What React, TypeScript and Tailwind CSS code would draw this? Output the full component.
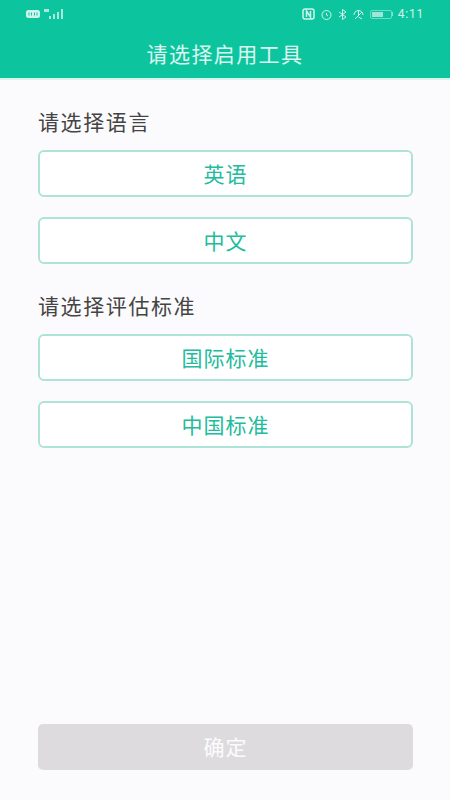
const cjk = "font-['Noto_Sans_CJK_SC','Noto_Sans',sans-serif]";

function OptionButton({ label }: { label: string }) {
  return (
    <button className="flex h-[47px] w-full items-center justify-center rounded-[6px] border-2 border-[#b0e3d7] bg-white pb-px text-[21px] leading-none tracking-[1px] text-[#22bb9c]">
      {label}
    </button>
  );
}

function StatusBar() {
  return (
    <div className="flex h-[28px] items-center justify-between px-[26px] text-white/80">
      <div className="flex items-center gap-[3px]">
        <svg width="14" height="10" viewBox="0 0 14 10" fill="currentColor">
          <rect x="0" y="1" width="14" height="8" rx="2.5" />
          <path d="M3 3.5v3M5.5 3.5v3M8.5 3.5v3M11 3.5v3" stroke="#0cc49e" strokeWidth="1" />
        </svg>
        <svg width="21" height="11" viewBox="0 0 21 11" fill="currentColor" opacity="0.8">
          <rect x="1" y="0" width="5" height="3" />
          <rect x="6" y="7" width="2" height="3" />
          <rect x="10" y="5" width="2" height="5" />
          <rect x="14" y="3" width="2" height="7" />
          <rect x="18" y="0" width="2" height="10" />
        </svg>
      </div>
      <div className="flex items-center gap-[5px]">
        <svg width="13" height="12" viewBox="0 0 13 12" fill="none" stroke="currentColor" strokeWidth="1.5">
          <rect x="1" y="1" width="11" height="10" rx="2" />
          <path d="M4.500 9V3l4 6V3" />
        </svg>
        <svg width="13" height="11" viewBox="0 0 13 11" fill="none" stroke="currentColor" strokeWidth="1">
          <circle cx="6.500" cy="6" r="4.500" />
          <path d="M6.500 4v2l1.500 1" />
        </svg>
        <svg width="9" height="11" viewBox="0 0 9 11" fill="none" stroke="currentColor" strokeWidth="1">
          <path d="M1 3l7 5-3.500 2.500V.5L8 3 1 8" />
        </svg>
        <svg width="13" height="11" viewBox="0 0 13 11" fill="none" stroke="currentColor" strokeWidth="1">
          <path d="M2 6a4.500 4.500 0 0 1 9 0M6.500 1.500V7M3 10l7-7M6.500 8l3.500 2" />
        </svg>
        <div className="flex items-center">
          <div className="flex h-[9px] w-[22px] items-center rounded-[2px] border border-white/40 p-px">
            <div className="h-full w-[11px] bg-white/60" />
          </div>
          <div className="h-[4px] w-[1px] bg-white/50" />
        </div>
        <span className="font-['Roboto',sans-serif] text-[12px] leading-none tracking-[0.8px]">4:11</span>
      </div>
    </div>
  );
}

export default function App() {
  return (
    <div className={`flex h-[800px] w-[450px] flex-col bg-[#fbfafc] ${cjk}`}>
      <header className="h-[80px] border-b-2 border-[#d5f5ed] bg-[#0cc49e]">
        <StatusBar />
        <h1 className="mt-[6px] text-center text-[21px] leading-[38px] tracking-[1.4px] text-white/85">请选择启用工具</h1>
      </header>
      <main className="flex flex-1 flex-col pl-[38px] pr-[37px]">
        <h2 className="mt-[27px] text-[21px] leading-[28px] tracking-[1.6px] text-[#444444]">请选择语言</h2>
        <div className="mt-[15px] flex flex-col gap-[20px]">
          <OptionButton label="英语" />
          <OptionButton label="中文" />
        </div>
        <h2 className="mt-[27px] text-[21px] leading-[28px] tracking-[1.6px] text-[#444444]">请选择评估标准</h2>
        <div className="mt-[15px] flex flex-col gap-[20px]">
          <OptionButton label="国际标准" />
          <OptionButton label="中国标准" />
        </div>
        <button className="mb-[30px] mt-auto h-[46px] w-full rounded-[5px] bg-[#dddbde] text-[21px] tracking-[1px] text-white/90">确定</button>
      </main>
    </div>
  );
}
